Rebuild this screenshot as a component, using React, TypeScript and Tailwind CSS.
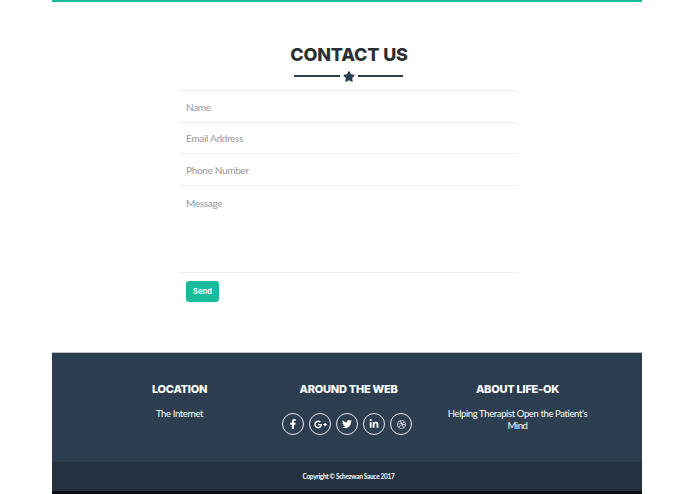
import { FaDribbble, FaFacebookF, FaGooglePlusG, FaLinkedinIn, FaStar, FaTwitter } from "react-icons/fa";

const fields = [
  { label: "Name", box: "h-[32px] pt-[1px]" },
  { label: "Email Address", box: "h-[31px]" },
  { label: "Phone Number", box: "h-[32px] pt-[1px]" },
];

const socials = [
  { icon: FaFacebookF, name: "Facebook", size: "h-[10px] w-[10px]" },
  { icon: FaGooglePlusG, name: "Google Plus", size: "h-[13px] w-[13px]" },
  { icon: FaTwitter, name: "Twitter", size: "h-[10px] w-[10px]" },
  { icon: FaLinkedinIn, name: "LinkedIn", size: "h-[10px] w-[10px]" },
  { icon: FaDribbble, name: "Dribbble", size: "h-[9px] w-[9px]" },
];

const heading = "font-['Inter',sans-serif] font-extrabold uppercase text-white text-[11px] leading-[14px] tracking-[-0.25px]";
const footerText = "mt-[12px] text-[9.5px] leading-[12px] tracking-[-0.38px]";

export default function App() {
  return (
    <div className="h-[494px] overflow-hidden bg-white font-['Lato',sans-serif]">
      <div className="mx-[52px] flex h-[494px] w-[590px] flex-col">
        <div className="h-[2px] bg-[#18bc9c]" />

        <section className="h-[350px] pl-[128px] pr-[124px]">
          <h2 className="mt-[42px] text-center font-['Inter',sans-serif] text-[18px] font-extrabold uppercase leading-[21px] tracking-[-0.15px] text-[#2c2f33]">
            Contact Us
          </h2>
          <div className="mt-[4px] flex h-[14px] items-center justify-center gap-[3px] pr-[2px]">
            <div className="h-[2px] w-[46px] bg-[#2c3e50]" />
            <FaStar className="h-[11px] w-[12px] text-[#2c3e50]" />
            <div className="h-[2px] w-[45px] bg-[#2c3e50]" />
          </div>

          <form className="mt-[7px] border-t border-[#eeeeee]">
            {fields.map((field) => (
              <div
                key={field.label}
                className={`flex items-center border-b border-[#eeeeee] px-[6px] text-[10px] tracking-[-0.3px] text-[#999999] ${field.box}`}
              >
                {field.label}
              </div>
            ))}
            <div className="h-[87px] border-b border-[#eeeeee] px-[6px] pt-[10px] text-[10px] leading-[14px] tracking-[-0.3px] text-[#999999]">
              Message
            </div>
            <button
              type="button"
              className="ml-[6px] mt-[8px] flex h-[21px] w-[33px] items-center justify-center rounded-[3px] bg-[#18bc9c] font-['Inter',sans-serif] text-[7.5px] font-bold text-white"
            >
              Send
            </button>
          </form>
        </section>

        <footer className="flex h-[110px] border-t border-[#b9c2cb] bg-[#2c3e50] pl-[43px] pr-[40px] pt-[29px] text-center text-white">
          <div className="grid w-full grid-cols-3">
            <div className="px-[12px]">
              <h3 className={heading}>Location</h3>
              <p className={footerText}>The Internet</p>
            </div>
            <div className="px-[15px]">
              <h3 className={heading}>Around the Web</h3>
              <div className="mt-[17px] flex justify-center gap-[5px] pr-[3px]">
                {socials.map((social) => (
                  <div
                    key={social.name}
                    aria-label={social.name}
                    className="flex h-[22px] w-[22px] items-center justify-center rounded-full border border-[#e6e9ec]"
                  >
                    <social.icon className={social.size} />
                  </div>
                ))}
              </div>
            </div>
            <div className="px-[12px]">
              <h3 className={heading}>About Life-OK</h3>
              <p className={footerText}>Helping Therapist Open the Patient's Mind</p>
            </div>
          </div>
        </footer>

        <div className="flex h-[29px] items-center justify-center bg-[#233140] pl-[3px] text-[6.5px] font-bold tracking-[-0.3px] text-white">
          Copyright © Schezwan Sauce 2017
        </div>
        <div className="h-[3px] bg-[#0b0f13]" />
      </div>
    </div>
  );
}
